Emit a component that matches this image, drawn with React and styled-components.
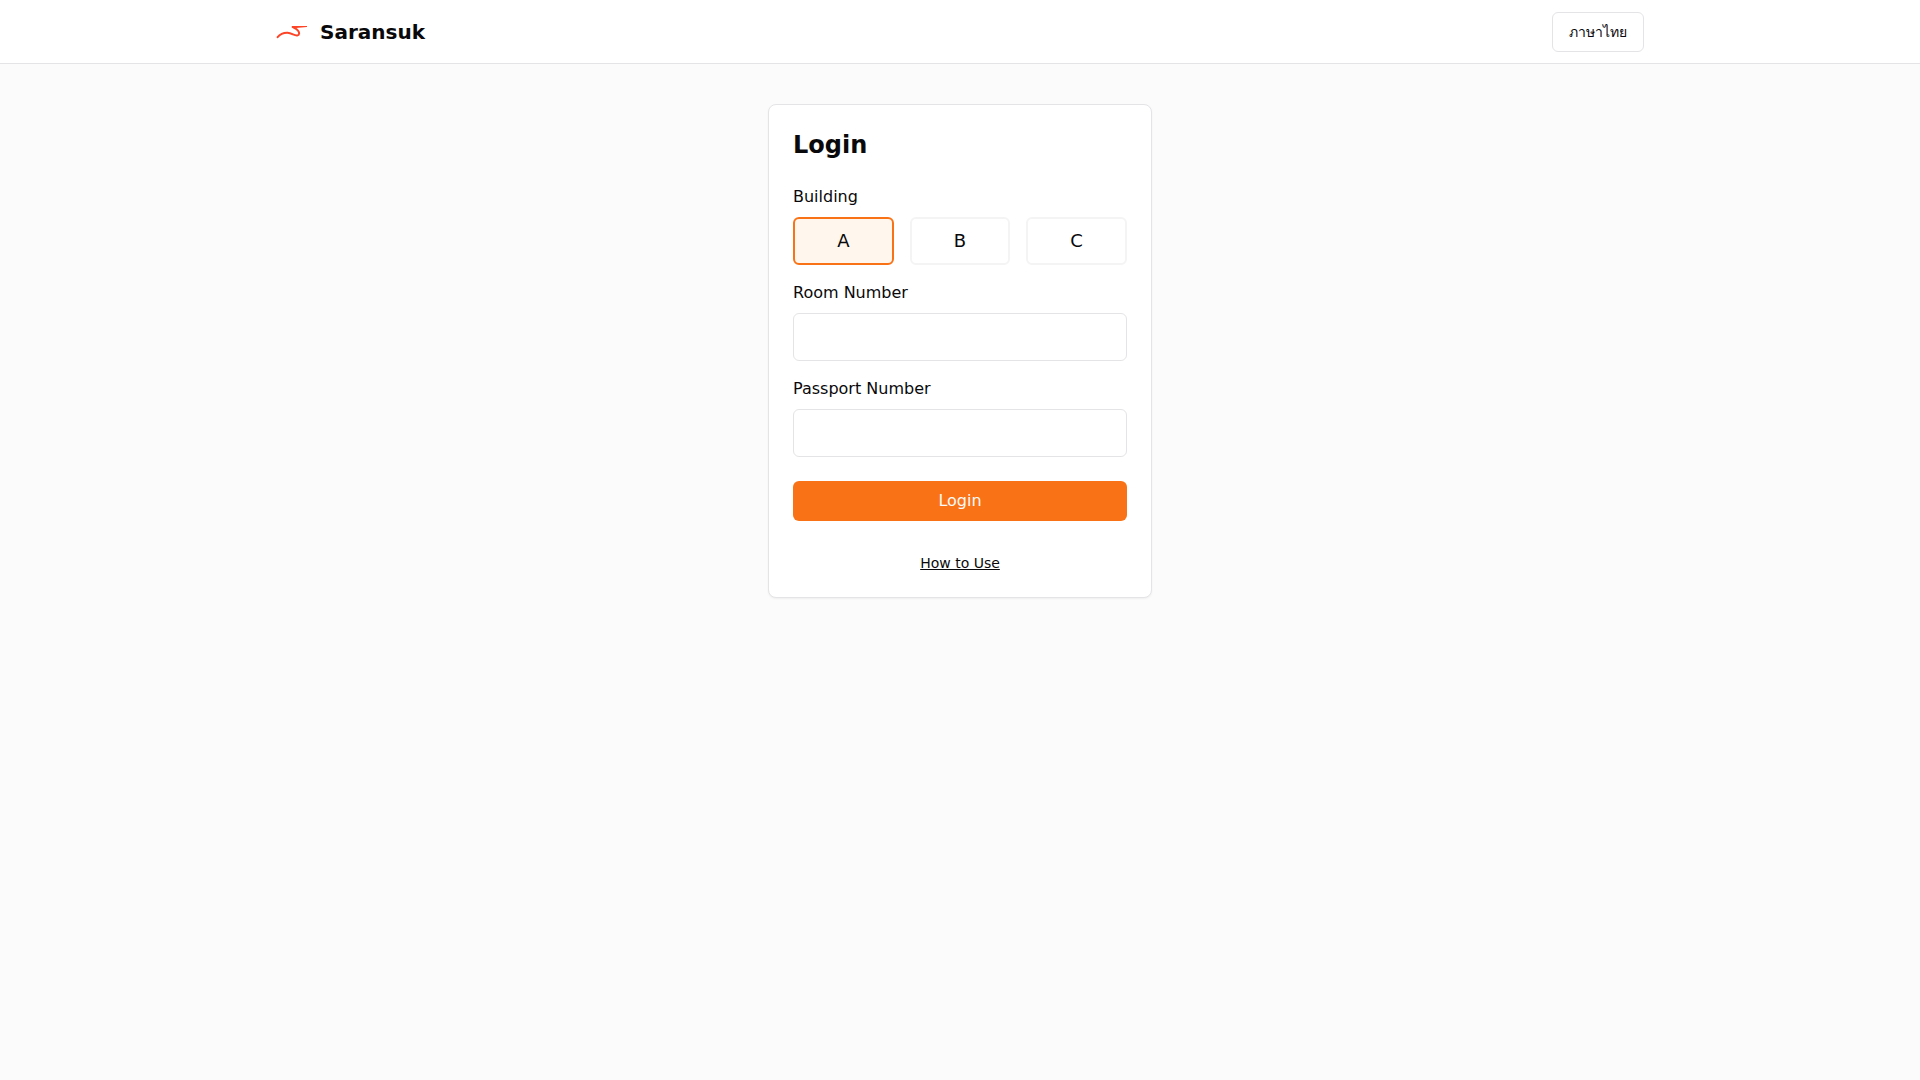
import React, { useState } from "react";
import styled, { createGlobalStyle } from "styled-components";

const GlobalStyle = createGlobalStyle`
  *, *::before, *::after { box-sizing: border-box; }
  body {
    margin: 0;
    background: #fbfbfb;
    color: #09090b;
    font-family: "DejaVu Sans", system-ui, sans-serif;
    font-size: 16px;
    line-height: 24px;
  }
  button, input { font: inherit; color: inherit; }
`;

const Header = styled.header`
  background: #fff;
  border-bottom: 1px solid #e4e4e7;
`;

const HeaderInner = styled.div`
  display: flex;
  align-items: center;
  justify-content: space-between;
  max-width: 1400px;
  margin: 0 auto;
  padding: 12px 16px 11px;
`;

const Brand = styled.a`
  display: flex;
  align-items: center;
  gap: 12px;
  color: inherit;
  font-size: 20px;
  font-weight: 700;
  line-height: 28px;
  text-decoration: none;
`;

const LanguageButton = styled.button`
  height: 40px;
  padding: 0 16px;
  background: #fff;
  border: 1px solid #e4e4e7;
  border-radius: 6px;
  font-size: 14px;
  font-weight: 500;
  line-height: 20px;
  cursor: pointer;
`;

const Main = styled.main`
  display: flex;
  justify-content: center;
  padding: 40px 16px;
`;

const Card = styled.section`
  width: 100%;
  max-width: 384px;
  padding: 24px;
  background: #fff;
  border: 1px solid #e4e4e7;
  border-radius: 8px;
  box-shadow: 0 1px 2px rgba(0, 0, 0, 0.05);
`;

const Title = styled.h1`
  margin: 0 0 24px;
  font-size: 24px;
  font-weight: 700;
  line-height: 32px;
`;

const Form = styled.form`
  display: flex;
  flex-direction: column;
  gap: 16px;
`;

const Field = styled.div`
  display: flex;
  flex-direction: column;
  gap: 8px;
`;

const Options = styled.div`
  display: grid;
  grid-template-columns: repeat(3, 1fr);
  gap: 16px;
`;

const Option = styled.button`
  height: 48px;
  padding: 0;
  background: ${(p) => (p.$active ? "#fff7ed" : "#fff")};
  border: 2px solid ${(p) => (p.$active ? "#f97316" : "#f4f4f5")};
  border-radius: 6px;
  font-size: 18px;
  line-height: 28px;
  cursor: pointer;
`;

const Input = styled.input`
  width: 100%;
  height: 48px;
  padding: 8px 12px;
  background: #fff;
  border: 1px solid #e4e4e7;
  border-radius: 6px;
`;

const Submit = styled.button`
  height: 40px;
  margin-top: 8px;
  background: #f97316;
  border: 0;
  border-radius: 6px;
  color: #fafafa;
  cursor: pointer;
`;

const Help = styled.div`
  display: flex;
  justify-content: center;
  margin-top: 32px;
  font-size: 14px;
  line-height: 20px;
`;

const HelpLink = styled.a`
  color: inherit;
  text-decoration: underline;
`;

function Logo() {
  return (
    <svg width="32" height="32" viewBox="0 0 32 32" fill="none" aria-hidden="true">
      <path
        d="M1.6 21.2C4.2 18 8 16.7 11.5 16.8C15.8 17 18.4 19.8 21.2 19.4C23.8 19 23.6 16.4 21.8 14.4C20.4 12.7 18 11.8 16.6 11"
        stroke="#fd4427"
        strokeWidth="2"
        strokeLinecap="round"
        strokeLinejoin="round"
      />
      <path d="M15.8 10L31 10V11L20 12L16.3 11.8Z" fill="#fd4427" />
    </svg>
  );
}

export default function App() {
  const [building, setBuilding] = useState("A");

  return (
    <>
      <GlobalStyle />
      <Header>
        <HeaderInner>
          <Brand href="#">
            <Logo />
            Saransuk
          </Brand>
          <LanguageButton type="button">ภาษาไทย</LanguageButton>
        </HeaderInner>
      </Header>
      <Main>
        <Card>
          <Title>Login</Title>
          <Form onSubmit={(e) => e.preventDefault()}>
            <Field role="group" aria-labelledby="building-label">
              <span id="building-label">Building</span>
              <Options>
                {["A", "B", "C"].map((name) => (
                  <Option
                    key={name}
                    type="button"
                    $active={building === name}
                    aria-pressed={building === name}
                    onClick={() => setBuilding(name)}
                  >
                    {name}
                  </Option>
                ))}
              </Options>
            </Field>
            <Field>
              <label htmlFor="room">Room Number</label>
              <Input id="room" type="text" />
            </Field>
            <Field>
              <label htmlFor="passport">Passport Number</label>
              <Input id="passport" type="text" />
            </Field>
            <Submit type="submit">Login</Submit>
          </Form>
          <Help>
            <HelpLink href="#how-to-use">How to Use</HelpLink>
          </Help>
        </Card>
      </Main>
    </>
  );
}
